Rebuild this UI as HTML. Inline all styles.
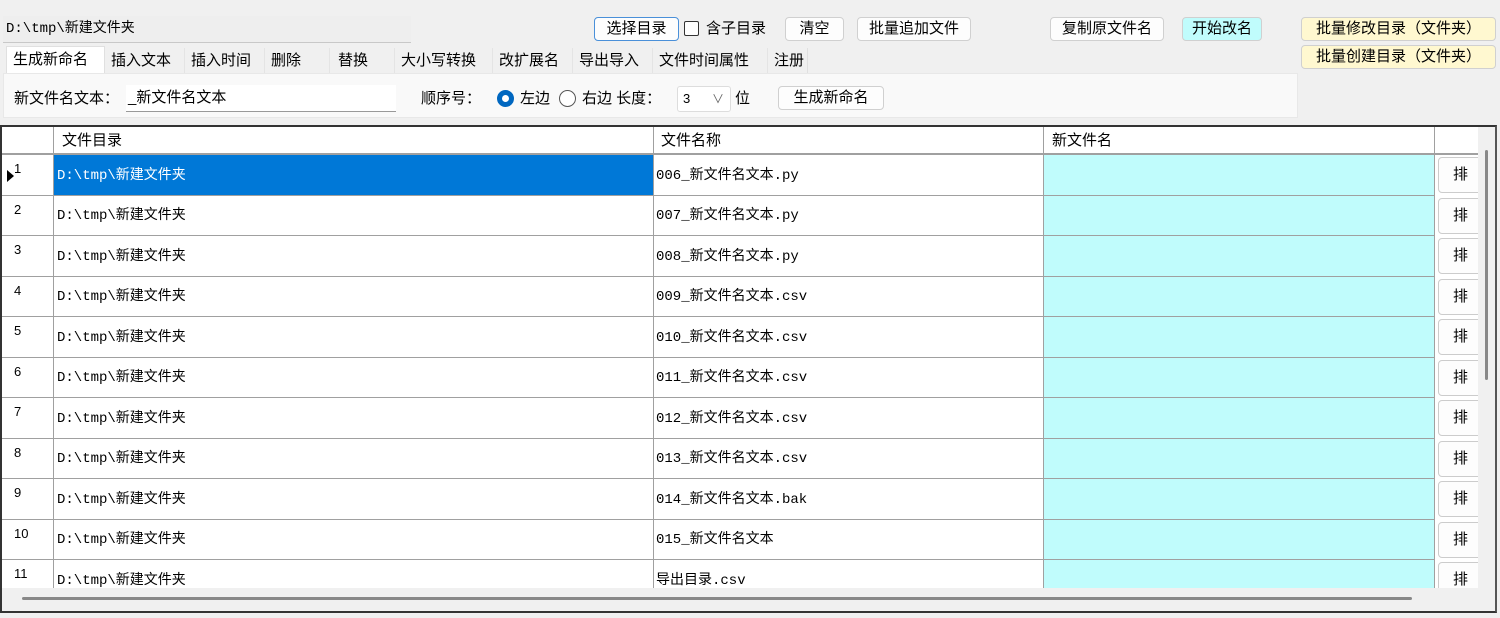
<!DOCTYPE html><html><head><meta charset="utf-8"><style>
*{box-sizing:border-box;margin:0;padding:0}
body{width:1500px;height:618px;background:#f0f0f0;font-family:"Liberation Sans","Noto Sans CJK SC",sans-serif;font-size:15px;color:#000;position:relative;overflow:hidden}
.a{position:absolute;white-space:nowrap}
.btn{position:absolute;height:24px;border:1px solid #d0d0d0;border-radius:4px;background:#fdfdfd;text-align:center;line-height:22px;font-size:15px}
.mono{font-family:"Liberation Mono","Noto Sans CJK SC",monospace;font-size:13px}
.tab{position:absolute;top:48px;height:25px;line-height:25px;font-size:15px;padding-left:6px;border-right:1px solid #e4e4e4}
.cell{position:absolute;border-bottom:1px solid #a0a0a0;border-right:1px solid #a0a0a0;background:#fff;padding-left:3px;overflow:hidden;white-space:nowrap}
</style></head><body>
<div class="a mono" style="left:3px;top:16px;width:408px;height:27px;border-bottom:1px solid #c8c8c8;background:#eeeeee;line-height:27px;padding-left:3px;font-size:14px">D:\tmp\新建文件夹</div>
<div class="btn" style="left:594px;top:17px;width:85px;border:1px solid #4a90d9">选择目录</div>
<div class="a" style="left:684px;top:21px;width:15px;height:15px;border:1px solid #333;border-radius:2px;background:#fff"></div>
<div class="a" style="left:706px;top:17px;line-height:24px">含子目录</div>
<div class="btn" style="left:785px;top:17px;width:59px">清空</div>
<div class="btn" style="left:857px;top:17px;width:114px">批量追加文件</div>
<div class="btn" style="left:1050px;top:17px;width:114px">复制原文件名</div>
<div class="btn" style="left:1182px;top:17px;width:80px;background:#c0fcfc">开始改名</div>
<div class="btn" style="left:1301px;top:17px;width:195px;background:#fff8d0">批量修改目录（文件夹）</div>
<div class="btn" style="left:1301px;top:45px;width:195px;background:#fff8d0">批量创建目录（文件夹）</div>
<div class="tab" style="left:6px;top:46px;width:99px;height:28px;background:#fff;border:1px solid #e0e0e0;border-bottom:none">生成新命名</div>
<div class="tab" style="left:105px;width:80px">插入文本</div>
<div class="tab" style="left:185px;width:80px">插入时间</div>
<div class="tab" style="left:265px;width:65px">删除</div>
<div class="tab" style="left:330px;width:65px;padding-left:8px">替换</div>
<div class="tab" style="left:395px;width:98px">大小写转换</div>
<div class="tab" style="left:493px;width:80px">改扩展名</div>
<div class="tab" style="left:573px;width:80px">导出导入</div>
<div class="tab" style="left:653px;width:115px">文件时间属性</div>
<div class="tab" style="left:768px;width:40px;border-right:1px solid #e0e0e0">注册</div>
<div class="a" style="left:3px;top:73px;width:1295px;height:45px;background:#f9f9f9;border:1px solid #e8e8e8"></div>
<div class="a" style="left:14px;top:87px">新文件名文本：</div>
<div class="a" style="left:126px;top:85px;width:270px;height:27px;background:#fff;border-bottom:1px solid #999;line-height:26px;padding-left:2px">_新文件名文本</div>
<div class="a" style="left:421px;top:87px">顺序号：</div>
<div class="a" style="left:497px;top:90px;width:17px;height:17px;border-radius:50%;border:5px solid #0067c0;background:#fff"></div>
<div class="a" style="left:520px;top:87px">左边</div>
<div class="a" style="left:559px;top:90px;width:17px;height:17px;border-radius:50%;border:1px solid #555;background:#fff"></div>
<div class="a" style="left:582px;top:87px">右边 长度：</div>
<div class="a" style="left:677px;top:86px;width:54px;height:26px;background:#fff;border:1px solid #ddd;border-radius:3px;line-height:24px;padding-left:5px;font-size:13px">3<span style="position:absolute;right:6px;color:#666;font-size:12px">∨</span></div>
<div class="a" style="left:735px;top:87px">位</div>
<div class="btn" style="left:778px;top:86px;width:106px">生成新命名</div>
<div class="a" style="left:0px;top:125px;width:1497px;height:488px;border:2px solid #333;background:#f0f0f0;border-right-color:#555"></div>
<div class="a" style="left:2px;top:127px;width:1476px;height:461px;background:#fff;overflow:hidden" id="g">
<div class="cell" style="left:0;top:0;width:52px;height:28px;border-bottom:2px solid #a0a0a0"></div>
<div class="cell" style="left:52px;top:0;width:600px;height:28px;line-height:28px;padding-left:8px;border-bottom:2px solid #a0a0a0">文件目录</div>
<div class="cell" style="left:652px;top:0;width:390px;height:28px;line-height:28px;padding-left:7px;border-bottom:2px solid #a0a0a0">文件名称</div>
<div class="cell" style="left:1042px;top:0;width:391px;height:28px;line-height:28px;padding-left:8px;border-bottom:2px solid #a0a0a0">新文件名</div>
<div class="cell" style="left:1433px;top:0;width:50px;height:28px;border-bottom:2px solid #a0a0a0;border-right:none"></div>
</div>
<script>
var g=document.getElementById('g');var names=['006_新文件名文本.py','007_新文件名文本.py','008_新文件名文本.py','009_新文件名文本.csv','010_新文件名文本.csv','011_新文件名文本.csv','012_新文件名文本.csv','013_新文件名文本.csv','014_新文件名文本.bak','015_新文件名文本','导出目录.csv'];
var h='';for(var i=0;i<11;i++){var t=Math.round(28+i*40.5);var nt=Math.round(28+(i+1)*40.5);var hh=nt-t;var sel=i==0;var lh=hh+1;
var st='top:'+t+'px;height:'+hh+'px;line-height:'+lh+'px;';
h+='<div class="cell" style="left:0;width:52px;'+st+'line-height:28px;padding-left:12px;font-size:13px">'+(sel?'<span style="position:absolute;left:5px;top:15px;width:0;height:0;border-top:6px solid transparent;border-bottom:6px solid transparent;border-left:7px solid #000"></span>':'')+(i+1)+'</div>';
h+='<div class="cell mono" style="left:52px;'+st+'font-size:14px;width:600px;'+(sel?'background:#0078d7;color:#fff;':'')+'">D:\\tmp\\新建文件夹</div>';
h+='<div class="cell mono" style="left:652px;'+st+'width:390px;font-size:14px;padding-left:2px">'+names[i]+'</div>';
h+='<div class="cell" style="left:1042px;'+st+'width:391px;background:#c0fcfc"></div>';
h+='<div class="cell" style="left:1433px;'+st+'width:43px;border-right:none;border-bottom:none"><div style="position:absolute;left:3px;top:2px;width:50px;height:36px;border:1px solid #ccc;border-radius:4px;background:#fdfdfd;line-height:34px;padding-left:14px">排</div></div>';}
g.innerHTML+=h;
</script>
<div class="a" style="left:1478px;top:127px;width:17px;height:461px;background:#f0f0f0"></div>
<div class="a" style="left:1485px;top:150px;width:3px;height:230px;background:#888;border-radius:2px"></div>
<div class="a" style="left:2px;top:588px;width:1476px;height:22px;background:#f0f0f0"></div>
<div class="a" style="left:22px;top:597px;width:1390px;height:3px;background:#888;border-radius:2px"></div>
</body></html>
